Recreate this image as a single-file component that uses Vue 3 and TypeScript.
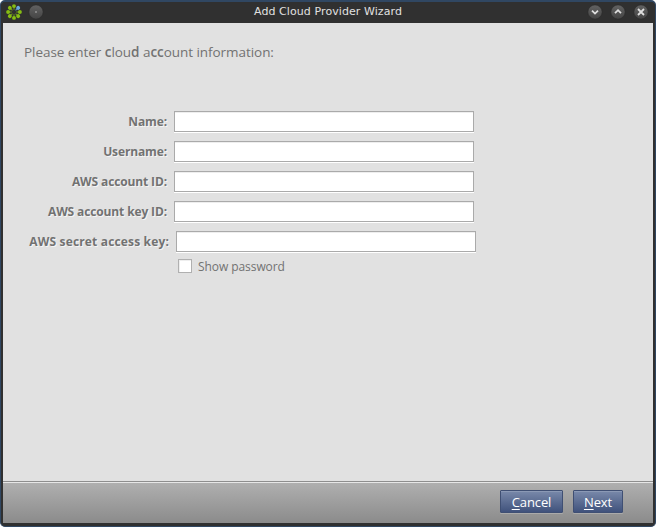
<script setup lang="ts">
import { reactive, ref } from 'vue'

interface Field {
  key: string
  label: string
  secret?: boolean
}

const fields: Field[] = [
  { key: 'name', label: 'Name:' },
  { key: 'username', label: 'Username:' },
  { key: 'account', label: 'AWS account ID:' },
  { key: 'key-id', label: 'AWS account key ID:' },
  { key: 'secret', label: 'AWS secret access key:', secret: true },
]
const values = reactive<Record<string, string>>({ name: '', username: '', account: '', 'key-id': '', secret: '' })
const showPassword = ref(false)
const petals = [0, 45, 90, 135, 180, 225, 270, 315]
const controls = ['M5 6.6L8 9.6L11 6.6', 'M5 9.2L8 6.2L11 9.2', 'M5 5L11 11M11 5L5 11']
</script>

<template>
  <div class="window">
    <header class="titlebar">
      <div class="left">
        <svg class="logo" width="16" height="16" viewBox="0 0 16 16">
          <g v-for="a in petals" :key="a" :transform="`rotate(${a} 8 8)`">
            <path d="M8 5.8V3" :stroke="a === 45 ? '#5b97cc' : '#6f9a1c'" stroke-width="1" />
            <circle cx="8" cy="2.1" r="1.95" :fill="a === 45 ? '#68aae2' : '#86bd12'" />
          </g>
        </svg>
        <svg class="orb" width="16" height="16" viewBox="0 0 16 16">
          <defs>
            <linearGradient id="orb" x1="0" y1="0" x2="0" y2="1">
              <stop offset="0" stop-color="#626262" />
              <stop offset="1" stop-color="#444" />
            </linearGradient>
          </defs>
          <circle cx="8" cy="8" r="7.1" fill="url(#orb)" stroke="#282828" stroke-width=".5" />
          <path d="M8 7v2" stroke="#b0b0b0" />
        </svg>
      </div>
      <h1 class="title">Add Cloud Provider Wizard</h1>
      <div class="controls">
        <svg v-for="d in controls" :key="d" width="16" height="16" viewBox="0 0 16 16">
          <circle cx="8" cy="8" r="7.1" fill="url(#orb)" stroke="#282828" stroke-width=".5" />
          <path :d="d" fill="none" stroke="#dedede" stroke-width="1.8" />
        </svg>
      </div>
    </header>
    <main class="content">
      <p class="intro">Please enter <b>c</b>lou<b>d</b> a<b>cc</b>ount information:</p>
      <form class="form" @submit.prevent>
        <div v-for="f in fields" :key="f.key" class="row" :class="f.key">
          <label :for="f.key">{{ f.label }}</label>
          <input :id="f.key" v-model="values[f.key]" :type="f.secret && !showPassword ? 'password' : 'text'" />
        </div>
        <label class="check"><input v-model="showPassword" type="checkbox" /><span>Show password</span></label>
      </form>
    </main>
    <footer class="footer">
      <button class="cancel"><u>C</u>ancel</button>
      <button class="next"><u>N</u>ext</button>
    </footer>
  </div>
</template>

<style>
body { background: #fff; }
</style>

<style scoped>
* { box-sizing: border-box; }
.window {
  width: 656px; height: 527px; display: flex; flex-direction: column;
  padding: 0 2px 3px; background: #303030; border: 1px solid #304762; border-top-width: 2px;
  border-radius: 5px; overflow: hidden;
  font: 12px "Open Sans", sans-serif; color: #727272;
}
.titlebar { height: 21px; flex: none; display: grid; grid-template-columns: 1fr auto 1fr; align-items: center; background: #303030; }
.left { display: flex; gap: 6px; padding-left: 3px; }
.controls { display: flex; justify-content: flex-end; gap: 7px; padding-right: 4px; }
.left svg, .controls svg { display: block; margin-top: -2px; }
.title { margin: -2px 0 0; font: 11px/16px "DejaVu Sans", sans-serif; letter-spacing: .08px; color: #e0e0e0; white-space: nowrap; }
.content { height: 458px; flex: none; background: #e1e1e1; padding: 19px 21px 0; }
.intro { margin: 0; font-size: 13.5px; line-height: 20px; height: 69px; letter-spacing: -.05px; white-space: nowrap; }
.intro b { font-weight: 600; }
.row { display: flex; height: 30px; align-items: flex-start; gap: 7px; }
.row label {
  width: 143px; text-align: right; font-weight: 700; line-height: 21px; letter-spacing: -.13px;
  white-space: nowrap; text-shadow: 1px 1px 0 #f5f5f5;
}
.row.secret { height: 28px; }
.row.secret label { width: 145px; letter-spacing: .16px; }
.row input {
  width: 300px; height: 21px; margin: 0; padding: 1px 4px; outline: 0; border: 1px solid #aaa; border-radius: 0;
  background: #fff; box-shadow: inset 0 1px #eee, 0 1px #fff; font: inherit; color: #555;
}
.check { display: flex; align-items: center; gap: 6px; margin-left: 154px; height: 14px; white-space: nowrap; letter-spacing: -.07px; }
.check input { appearance: none; width: 14px; height: 14px; margin: 0; flex: none; background: #fff; border: 1px solid #b0b0b0; box-shadow: inset 1px 1px #eee; }
.footer {
  flex: 1; display: flex; justify-content: flex-end; gap: 10px; padding: 8px 30px 0 0;
  background: linear-gradient(#b0b0b0, #8b8b8b); border-top: 1px solid #8e8e8e; box-shadow: inset 0 1px #e6e6e6;
}
.footer button {
  height: 23px; padding: 0; border: 1px solid #3f4f73; border-radius: 1px; color: #fff;
  background: linear-gradient(#7989aa, #40527c); box-shadow: inset 0 1px #8b99b5, 0 1px #aaa;
  font: 13px/20px "Open Sans", sans-serif; letter-spacing: -.1px;
}
.footer u { text-underline-offset: 2px; }
.cancel { width: 63px; }
.next { width: 50px; }
</style>
